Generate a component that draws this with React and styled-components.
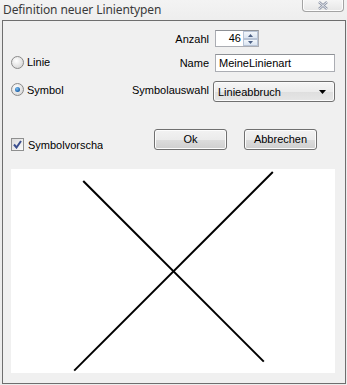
import React from "react";
import styled, { createGlobalStyle } from "styled-components";

const Global = createGlobalStyle`
  html, body {
    margin: 0;
    padding: 0;
    background: #ececec;
  }
  body {
    width: 347px;
    height: 385px;
    overflow: hidden;
  }
`;

const Window = styled.div`
  width: 347px;
  height: 385px;
  box-sizing: border-box;
  background: linear-gradient(#f3f3f3, #ebebeb 30px, #ececec);
  display: flex;
  flex-direction: column;
  font-family: "Liberation Sans", Arial, sans-serif;
  font-size: 11px;
  color: #000;
`;

const TitleBar = styled.div`
  height: 22px;
  display: flex;
  align-items: flex-start;
  justify-content: space-between;
  padding: 0 3px 0 3px;
`;

const Title = styled.div`
  font-family: "Noto Sans", "Open Sans", sans-serif;
  font-size: 12px;
  color: #3a3a3a;
  line-height: 20px;
  letter-spacing: -0.1px;
`;

const CloseButton = styled.div`
  width: 40px;
  height: 12px;
  margin-top: -1px;
  border: 1px solid #a3a3a3;
  border-top: none;
  border-radius: 0 0 4px 4px;
  background: linear-gradient(#f7f7f7, #e6e6e6);
  display: flex;
  align-items: center;
  justify-content: center;
  box-shadow: inset 0 0 0 1px #fdfdfd;
`;

const Frame = styled.div`
  flex: 1;
  margin: 0 1px 1px 2px;
  border: 1px solid #6e6e6e;
  background: #f0f0f0;
  box-sizing: border-box;
  padding: 9px 10px 10px 8px;
  display: flex;
  flex-direction: column;
`;

const FormGrid = styled.div`
  display: grid;
  grid-template-columns: 1fr auto 120px;
  grid-template-rows: 17px 7px 18px 9px 21px;
  column-gap: 6px;
  align-items: center;
`;

const Label = styled.label`
  grid-column: 2;
  grid-row: ${({ $row }) => $row};
  text-align: right;
  white-space: nowrap;
  margin-top: ${({ $nudge }) => $nudge || 0}px;
`;

const RadioLine = styled.label`
  grid-column: 1;
  grid-row: ${({ $row }) => $row};
  display: flex;
  align-items: center;
  gap: 3px;
  margin-top: ${({ $nudge }) => $nudge || 0}px;
`;

const RadioDot = styled.span`
  width: 11px;
  height: 11px;
  border-radius: 50%;
  border: 1px solid #8a8a8a;
  background: radial-gradient(circle at 40% 35%, #ffffff, #dcdcdc 70%, #c8c8c8);
  display: flex;
  align-items: center;
  justify-content: center;
  flex-shrink: 0;

  &::after {
    content: "";
    width: 5px;
    height: 5px;
    border-radius: 50%;
    background: radial-gradient(circle at 40% 35%, #7fc2f2, #1a5fa8 70%, #0e3f7a);
    display: ${({ $checked }) => ($checked ? "block" : "none")};
  }
`;

const Spinner = styled.div`
  grid-column: 3;
  grid-row: 1;
  width: 44px;
  height: 17px;
  box-sizing: border-box;
  border: 1px solid #abadb3;
  border-top-color: #8e9196;
  background: #fff;
  display: flex;
`;

const SpinValue = styled.div`
  flex: 1;
  text-align: right;
  padding-right: 2px;
  line-height: 15px;
`;

const SpinButtons = styled.div`
  width: 15px;
  display: flex;
  flex-direction: column;
`;

const SpinButton = styled.div`
  flex: 1;
  border: 1px solid #b8c4d6;
  background: linear-gradient(#f2f6fb, #dbe5f1);
  display: flex;
  align-items: center;
  justify-content: center;
`;

const TextBox = styled.div`
  grid-column: 3;
  grid-row: 3;
  height: 18px;
  box-sizing: border-box;
  border: 1px solid #abadb3;
  border-top-color: #8e9196;
  background: #fff;
  padding-left: 3px;
  line-height: 16px;
`;

const Select = styled.div`
  grid-column: 3;
  grid-row: 5;
  height: 21px;
  margin-left: -2px;
  box-sizing: border-box;
  border: 1px solid #707070;
  border-radius: 3px;
  background: linear-gradient(#f6f6f6, #ececec 50%, #dedede 51%, #e6e6e6);
  display: flex;
  align-items: center;
  justify-content: space-between;
  padding: 0 8px 0 4px;
  box-shadow: inset 0 0 0 1px #fbfbfb;
`;

const ActionRow = styled.div`
  margin-top: 27px;
  display: flex;
  align-items: flex-start;
`;

const CheckLine = styled.label`
  width: 92px;
  margin-top: 9px;
  display: flex;
  align-items: center;
  gap: 4px;
  overflow: hidden;
  white-space: nowrap;
`;

const CheckBox = styled.span`
  width: 11px;
  height: 11px;
  border: 1px solid #8e8f8f;
  background: linear-gradient(135deg, #dcdcdc, #fbfbfb);
  display: flex;
  align-items: center;
  justify-content: center;
  flex-shrink: 0;
`;

const Buttons = styled.div`
  margin-left: 51px;
  display: flex;
  gap: 17px;
`;

const Button = styled.button`
  width: 73px;
  height: 21px;
  box-sizing: border-box;
  border: 1px solid #707070;
  border-radius: 3px;
  background: linear-gradient(#f2f2f2, #ebebeb 50%, #dddddd 51%, #cfcfcf);
  box-shadow: inset 0 0 0 1px #fcfcfc;
  font-family: "Liberation Sans", Arial, sans-serif;
  font-size: 11px;
  color: #000;
  padding: 0;
  padding-bottom: 2px;
`;

const Preview = styled.div`
  margin-top: 18px;
  flex: 1;
  background: #fff;
`;

const PreviewSvg = styled.svg`
  display: block;
  width: 100%;
  height: 100%;
`;

export default function App() {
  return (
    <>
      <Global />
      <Window>
        <TitleBar>
          <Title>Definition neuer Linientypen</Title>
          <CloseButton>
            <svg width="12" height="9" viewBox="0 0 12 9">
              <path d="M2 1 L10 8 M10 1 L2 8" stroke="#8f97a8" strokeWidth="2.4" fill="none" />
              <path d="M2 1 L10 8 M10 1 L2 8" stroke="#f4f5f8" strokeWidth="0.9" fill="none" />
            </svg>
          </CloseButton>
        </TitleBar>
        <Frame>
          <FormGrid>
            <Label $row={1}>Anzahl</Label>
            <Spinner>
              <SpinValue>46</SpinValue>
              <SpinButtons>
                <SpinButton>
                  <svg width="5" height="3" viewBox="0 0 5 3">
                    <path d="M0 3 L2.5 0 L5 3 Z" fill="#4d6185" />
                  </svg>
                </SpinButton>
                <SpinButton>
                  <svg width="5" height="3" viewBox="0 0 5 3">
                    <path d="M0 0 L2.5 3 L5 0 Z" fill="#4d6185" />
                  </svg>
                </SpinButton>
              </SpinButtons>
            </Spinner>

            <RadioLine $row={3} $nudge={-2}>
              <RadioDot />
              <span>Linie</span>
            </RadioLine>
            <Label $row={3}>Name</Label>
            <TextBox>MeineLinienart</TextBox>

            <RadioLine $row={5} $nudge={-4}>
              <RadioDot $checked />
              <span>Symbol</span>
            </RadioLine>
            <Label $row={5} $nudge={-4}>Symbolauswahl</Label>
            <Select>
              <span>Linieabbruch</span>
              <svg width="7" height="4" viewBox="0 0 7 4">
                <path d="M0 0 L7 0 L3.5 4 Z" fill="#000" />
              </svg>
            </Select>
          </FormGrid>

          <ActionRow>
            <CheckLine>
              <CheckBox>
                <svg width="9" height="9" viewBox="0 0 9 9">
                  <path d="M1 4.5 L3.5 7.5 L8 1" stroke="#3b4f8f" strokeWidth="2" fill="none" />
                </svg>
              </CheckBox>
              <span>Symbolvorschau</span>
            </CheckLine>
            <Buttons>
              <Button>Ok</Button>
              <Button>Abbrechen</Button>
            </Buttons>
          </ActionRow>

          <Preview>
            <PreviewSvg viewBox="0 0 323 203" preserveAspectRatio="none">
              <line x1="72" y1="12" x2="252" y2="192" stroke="#000" strokeWidth="2" />
              <line x1="261" y1="3" x2="63" y2="201" stroke="#000" strokeWidth="2" />
            </PreviewSvg>
          </Preview>
        </Frame>
      </Window>
    </>
  );
}
